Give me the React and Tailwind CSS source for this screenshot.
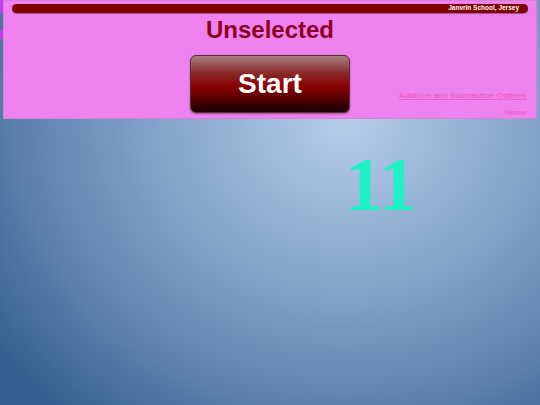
export default function App() {
  return (
    <div className="relative h-[405px] w-[540px] overflow-hidden bg-[radial-gradient(ellipse_80%_95%_at_64%_30%,#b6cde8_0%,#9cb8da_22%,#7e9fc6_48%,#5a80ab_76%,#34608f_100%)] font-['Liberation_Sans',Arial,sans-serif]">
      <div className="absolute left-0 top-0 h-[13px] w-[4px] bg-[#c040f0]" />
      <div className="absolute left-0 top-[30px] h-[9px] w-[4px] bg-[#c040f0]" />
      <div className="absolute left-[416px] top-0 h-[4px] w-[12px] rounded-b bg-[#4fc080]" />
      <div className="relative mx-[3px] flex h-[119px] flex-col border border-[#d880d8] bg-[#ee82ee]">
        <div className="mx-[8px] mt-[3px] flex h-[11px] items-center justify-end rounded-full bg-[#800000] px-[9px] shadow-[0_1px_1px_rgba(0,0,0,0.35)]">
          <span className="text-[6.5px] font-bold leading-none text-white">Janvrin School, Jersey</span>
        </div>
        <h1 className="mt-[3px] text-center text-[24px] font-bold leading-[28px] text-[#8b0022]">Unselected</h1>
        <div className="mt-[11px] grid grid-cols-[1fr_160px_1fr]">
          <div />
          <button className="flex h-[58px] items-center justify-center rounded-[6px] border border-[#5a3030] bg-[linear-gradient(to_bottom,#a98080_0%,#8a2a2a_30%,#8b0000_55%,#4a0000_80%,#1a0000_100%)] text-[28px] font-bold text-white shadow-[0_1px_2px_rgba(0,0,0,0.4)]">
            Start
          </button>
          <div className="flex flex-col items-end pr-[9px] pt-[36px]">
            <a className="text-[8px] font-bold leading-[10px] text-[#f060c8] underline">Addition and Subtraction Options</a>
            <a className="mt-[7px] text-[8px] font-bold leading-[10px] text-[#f060c8]">Home</a>
          </div>
        </div>
      </div>
      <div className="pl-[345px] pt-[20px]">
        <span className="font-['Liberation_Serif','Times_New_Roman',serif] text-[76px] font-bold leading-[90px] text-[#1ef2c6]">11</span>
      </div>
    </div>
  );
}
